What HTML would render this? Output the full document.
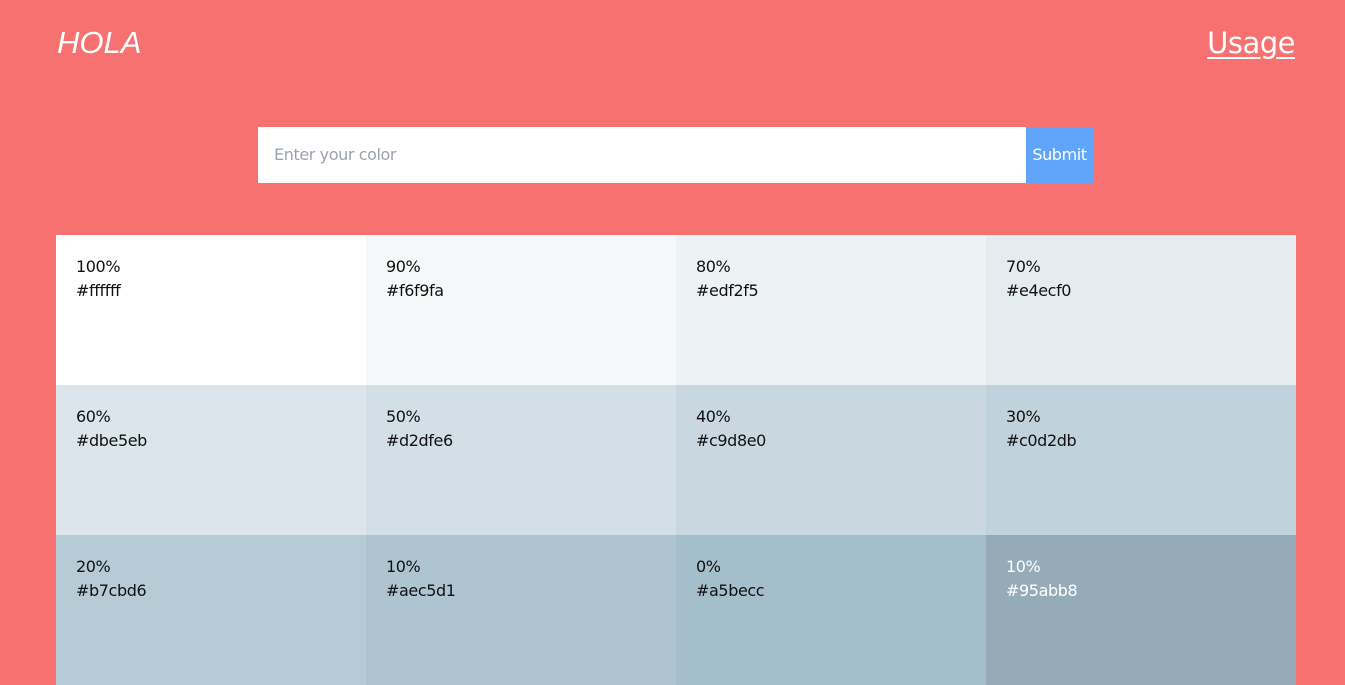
<!DOCTYPE html>
<html><head><meta charset="utf-8"><style>
*{margin:0;padding:0;box-sizing:border-box}
html,body{width:1345px;height:625px;overflow:hidden;background:#f87171;font-family:"DejaVu Sans","Liberation Sans",sans-serif}
.logo{position:absolute;left:57px;top:25px;color:#fff;font-style:italic;font-size:31px;font-family:"Liberation Sans",sans-serif}
.usage{position:absolute;right:50px;top:26px;color:#fff;font-size:29px;text-decoration:underline;text-underline-offset:4px;font-family:"DejaVu Sans",sans-serif;letter-spacing:-0.5px}
.inp{position:absolute;left:258px;top:127px;width:768px;height:56px;background:#fff;color:#9ca3af;font-size:16px;line-height:56px;padding-left:16px;letter-spacing:-0.4px}
.btn{position:absolute;left:1026px;top:127px;width:67px;height:56px;background:#60a5fa;color:#fff;font-size:16px;line-height:56px;text-align:center;letter-spacing:-0.4px}
.grid{position:absolute;left:56px;top:235px;width:1240px;display:grid;grid-template-columns:repeat(4,310px)}
.c{height:150px;padding:20px 20px;font-size:16px;line-height:24px;color:#111;letter-spacing:-0.4px}
</style></head><body>
<div class="logo">HOLA</div>
<div class="usage">Usage</div>
<div class="inp">Enter your color</div>
<div class="btn">Submit</div>
<div class="grid">
<div class="c" style="background:#ffffff">100%<br>#ffffff</div>
<div class="c" style="background:#f6f9fa">90%<br>#f6f9fa</div>
<div class="c" style="background:#edf2f5">80%<br>#edf2f5</div>
<div class="c" style="background:#e4ecf0">70%<br>#e4ecf0</div>
<div class="c" style="background:#dbe5eb">60%<br>#dbe5eb</div>
<div class="c" style="background:#d2dfe6">50%<br>#d2dfe6</div>
<div class="c" style="background:#c9d8e0">40%<br>#c9d8e0</div>
<div class="c" style="background:#c0d2db">30%<br>#c0d2db</div>
<div class="c" style="background:#b7cbd6">20%<br>#b7cbd6</div>
<div class="c" style="background:#aec5d1">10%<br>#aec5d1</div>
<div class="c" style="background:#a5becc">0%<br>#a5becc</div>
<div class="c" style="background:#95abb8;color:#fff">10%<br>#95abb8</div>
</div>
</body></html>
